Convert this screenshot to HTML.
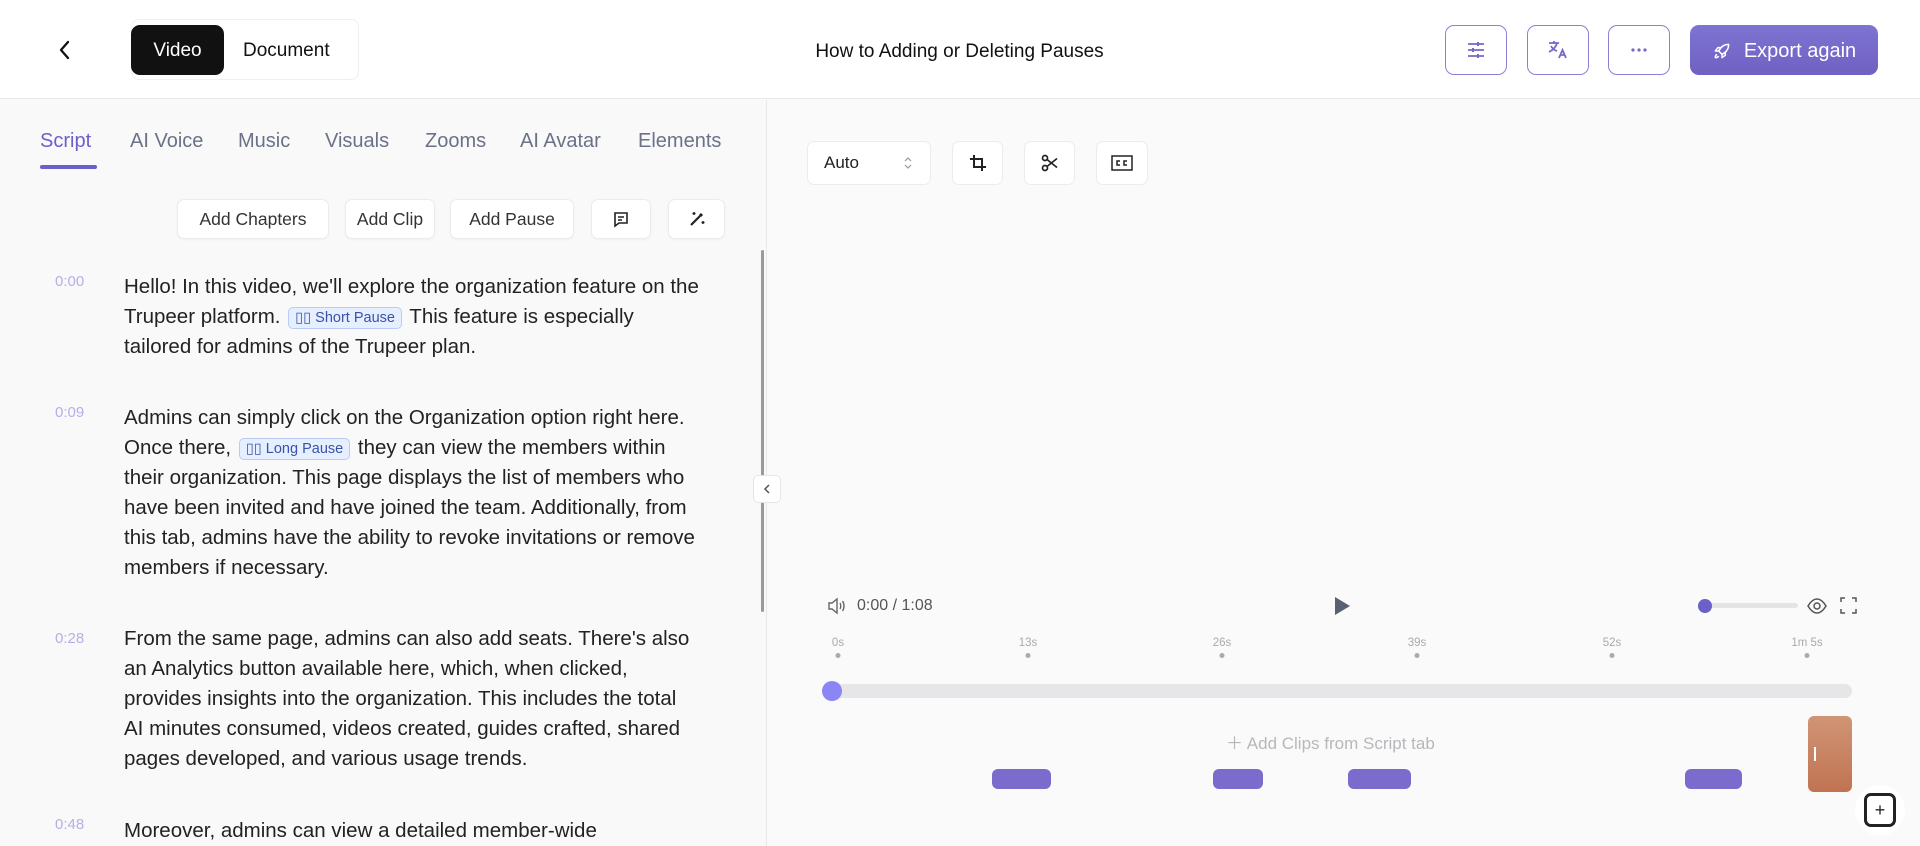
<!DOCTYPE html>
<html><head><meta charset="utf-8"><style>
*{box-sizing:border-box;margin:0;padding:0}
body{width:1920px;height:846px;overflow:hidden;background:#fafafa;font-family:"Liberation Sans",sans-serif;position:relative;color:#1f1f1f}
.a{position:absolute}
.hdr{left:0;top:0;width:1920px;height:99px;background:#fff;border-bottom:1px solid #e8e8ea}
.ib{border:1.5px solid #8a80d8;border-radius:9px;width:62px;height:50px;top:25px;display:flex;align-items:center;justify-content:center;background:#fff}
.tab{top:130px;font-size:20px;color:#6b7287}
.btn{top:199px;height:40px;background:#fff;border:1px solid #ececef;border-radius:7px;font-size:17.5px;color:#333;display:flex;align-items:center;justify-content:center;box-shadow:0 1px 2px rgba(0,0,0,.04)}
.ts{left:55px;font-size:15px;color:#b4b0e6}
.p{left:124px;font-size:20.5px;line-height:30px;color:#222;white-space:nowrap}
.chip{display:inline-block;background:#e6efff;border:1px solid #b8cdf5;color:#3a52a8;font-size:14.5px;line-height:20px;padding:0 6px;border-radius:5px;vertical-align:1px;margin:0 2px}
.tb{top:141px;height:44px;background:#fff;border:1px solid #ececef;border-radius:7px;display:flex;align-items:center;justify-content:center}
.tick{top:637px;font-size:11.5px;color:#aaa;transform:translateX(-50%)}
.dot{top:653px;width:5px;height:5px;border-radius:50%;background:#aaa;transform:translateX(-50%)}
.clip{top:769px;height:20px;border-radius:6px;background:#7a6bcc}
</style></head><body>
<div class="a hdr"></div>
<svg class="a" style="left:56px;top:38px" width="18" height="24" viewBox="0 0 18 24"><path d="M12 4L5 12l7 8" fill="none" stroke="#111" stroke-width="2.3" stroke-linecap="round" stroke-linejoin="round"/></svg>
<div class="a" style="left:131px;top:19px;width:228px;height:61px;border:1px solid #f0f0f2;border-radius:8px;background:#fff"></div>
<div class="a" style="left:131px;top:25px;width:93px;height:50px;background:#111;border-radius:9px;color:#fff;font-size:19px;display:flex;align-items:center;justify-content:center;padding-top:2px">Video</div>
<div class="a" style="left:243px;top:40px;font-size:19px;color:#111">Document</div>
<div class="a" style="left:0;width:1918px;top:41px;text-align:center;font-size:19px;color:#111;padding-left:1px">How to Adding or Deleting Pauses</div>
<div class="a ib" style="left:1445px"><svg width="20" height="20" viewBox="0 0 20 20" fill="none" stroke="#7468c8" stroke-width="1.8"><path d="M2 4h16M2 10h16M2 16h16"/><path d="M12 2v4M7 8v4M12 14v4" stroke-width="2"/></svg></div>
<div class="a ib" style="left:1527px"><svg width="22" height="22" viewBox="0 0 22 22" fill="none" stroke="#7468c8" stroke-width="1.8"><path d="M2 4h10M7 2v2M10 4c-1 4-4 7-8 9M4 7c1 2 3 4 6 5"/><path d="M12 19l3.5-8 3.5 8M13.3 16h4.4"/></svg></div>
<div class="a ib" style="left:1608px"><svg width="20" height="6" viewBox="0 0 20 6" fill="#7468c8"><circle cx="4" cy="3" r="1.6"/><circle cx="10" cy="3" r="1.6"/><circle cx="16" cy="3" r="1.6"/></svg></div>
<div class="a" style="left:1690px;top:25px;width:188px;height:50px;background:linear-gradient(#7f73d2,#6e61c2);border-radius:9px;color:#fff;font-size:20px;display:flex;align-items:center;justify-content:center;gap:12px;padding-top:2px"><svg width="20" height="20" viewBox="0 0 24 24" fill="none" stroke="#fff" stroke-width="1.8" stroke-linejoin="round"><path d="M20 4c-6 0-10 4-12 8l4 4c4-2 8-6 8-12z"/><path d="M8 12l-4 0 3-4h4M12 16v4l4-3v-4"/><path d="M6 16c-2 1-2 3-2 4 1 0 3 0 4-2"/></svg>Export again</div>
<!-- left panel -->
<div class="a" style="left:0;top:100px;width:767px;height:746px;background:#f9f9fa;border-right:1px solid #e8e8ea"></div>
<div class="a tab" style="left:40px;color:#6b5fc9">Script</div>
<div class="a" style="left:40px;top:165px;width:57px;height:4px;border-radius:2px;background:#6b5fc9"></div>
<div class="a tab" style="left:130px">AI Voice</div>
<div class="a tab" style="left:238px">Music</div>
<div class="a tab" style="left:325px">Visuals</div>
<div class="a tab" style="left:425px">Zooms</div>
<div class="a tab" style="left:520px">AI Avatar</div>
<div class="a tab" style="left:638px">Elements</div>
<div class="a btn" style="left:177px;width:152px">Add Chapters</div>
<div class="a btn" style="left:345px;width:90px">Add Clip</div>
<div class="a btn" style="left:450px;width:124px">Add Pause</div>
<div class="a btn" style="left:591px;width:60px"><svg width="18" height="18" viewBox="0 0 18 18" fill="none" stroke="#222" stroke-width="1.6"><path d="M3 3h12v10H7l-4 3z"/><path d="M6 7h6M6 10h4"/></svg></div>
<div class="a btn" style="left:668px;width:57px"><svg width="20" height="20" viewBox="0 0 20 20" fill="none" stroke="#222" stroke-width="2.2"><path d="M4 16l9-9"/><path d="M13 7l2-2" stroke-width="3"/><path d="M7 3v3M5.5 4.5h3M16 12v3M14.5 13.5h3" stroke-width="1.4"/></svg></div>
<div class="a" style="left:761px;top:250px;width:3px;height:362px;background:#9a9a9a;border-radius:2px"></div>
<div class="a" style="left:753px;top:475px;width:28px;height:28px;background:#fff;border:1px solid #e6e6e8;border-radius:5px;display:flex;align-items:center;justify-content:center"><svg width="10" height="12" viewBox="0 0 10 12"><path d="M7 2L3 6l4 4" fill="none" stroke="#555" stroke-width="1.5"/></svg></div>
<div class="a ts" style="top:273px">0:00</div>
<div class="a p" style="top:272px">Hello! In this video, we'll explore the organization feature on the<br>Trupeer platform. <span class="chip">▯▯ Short Pause</span> This feature is especially<br>tailored for admins of the Trupeer plan.</div>
<div class="a ts" style="top:404px">0:09</div>
<div class="a p" style="top:403px">Admins can simply click on the Organization option right here.<br>Once there, <span class="chip">▯▯ Long Pause</span> they can view the members within<br>their organization. This page displays the list of members who<br>have been invited and have joined the team. Additionally, from<br>this tab, admins have the ability to revoke invitations or remove<br>members if necessary.</div>
<div class="a ts" style="top:630px">0:28</div>
<div class="a p" style="top:624px">From the same page, admins can also add seats. There's also<br>an Analytics button available here, which, when clicked,<br>provides insights into the organization. This includes the total<br>AI minutes consumed, videos created, guides crafted, shared<br>pages developed, and various usage trends.</div>
<div class="a ts" style="top:816px">0:48</div>
<div class="a p" style="top:816px">Moreover, admins can view a detailed member-wide</div>
<!-- right -->
<div class="a tb" style="left:807px;width:124px;justify-content:space-between;padding:0 18px 0 16px;font-size:17px;color:#222">Auto<svg width="8" height="14" viewBox="0 0 8 14" fill="none" stroke="#999" stroke-width="1.2"><path d="M1 5l3-3 3 3M1 9l3 3 3-3"/></svg></div>
<div class="a tb" style="left:952px;width:51px"><svg width="18" height="18" viewBox="0 0 18 18" fill="none" stroke="#222" stroke-width="2"><path d="M5 1v12h12M1 5h12v12"/></svg></div>
<div class="a tb" style="left:1024px;width:51px"><svg width="18" height="18" viewBox="0 0 18 18" fill="none" stroke="#222" stroke-width="1.7"><circle cx="4" cy="4" r="2.5"/><circle cx="4" cy="14" r="2.5"/><path d="M6 5.5l10 8M6 12.5l10-8"/></svg></div>
<div class="a tb" style="left:1096px;width:52px"><svg width="22" height="16" viewBox="0 0 22 16" fill="none" stroke="#222" stroke-width="1.5"><rect x="1" y="1" width="20" height="14"/><path d="M9 6H6v4h3M16 6h-3v4h3"/></svg></div>
<svg class="a" style="left:827px;top:597px" width="20" height="18" viewBox="0 0 20 18" fill="none" stroke="#666" stroke-width="1.4"><path d="M2 6h3l5-4v14l-5-4H2z"/><path d="M13 6c1 1.5 1 4.5 0 6M15.5 4c2 3 2 7 0 10"/></svg>
<div class="a" style="left:857px;top:597px;font-size:16px;color:#555">0:00 / 1:08</div>
<svg class="a" style="left:1333px;top:596px" width="18" height="20" viewBox="0 0 18 20"><path d="M2 1l15 9-15 9z" fill="#5a6173"/></svg>
<div class="a" style="left:1702px;top:603px;width:96px;height:5px;border-radius:3px;background:#e4e4e6"></div>
<div class="a" style="left:1698px;top:599px;width:14px;height:14px;border-radius:50%;background:#6b5fc9"></div>
<svg class="a" style="left:1807px;top:597px" width="20" height="18" viewBox="0 0 20 18" fill="none" stroke="#555" stroke-width="1.5"><path d="M1 9c3-5 6-7 9-7s6 2 9 7c-3 5-6 7-9 7s-6-2-9-7z"/><circle cx="10" cy="9" r="3"/></svg>
<svg class="a" style="left:1840px;top:597px" width="17" height="17" viewBox="0 0 17 17" fill="none" stroke="#555" stroke-width="1.5"><path d="M1 5V1h4M12 1h4v4M16 12v4h-4M5 16H1v-4"/></svg>
<div class="a tick" style="left:838px">0s</div><div class="a dot" style="left:838px"></div>
<div class="a tick" style="left:1028px">13s</div><div class="a dot" style="left:1028px"></div>
<div class="a tick" style="left:1222px">26s</div><div class="a dot" style="left:1222px"></div>
<div class="a tick" style="left:1417px">39s</div><div class="a dot" style="left:1417px"></div>
<div class="a tick" style="left:1612px">52s</div><div class="a dot" style="left:1612px"></div>
<div class="a tick" style="left:1807px">1m 5s</div><div class="a dot" style="left:1807px"></div>
<div class="a" style="left:824px;top:684px;width:1028px;height:14px;border-radius:7px;background:#e6e6e8"></div>
<div class="a" style="left:822px;top:681px;width:20px;height:20px;border-radius:50%;background:#8b86f5"></div>
<div class="a" style="left:1226px;top:729px;font-size:17px;color:#b8b8bc">＋ Add Clips from Script tab</div>
<div class="a clip" style="left:992px;width:59px"></div>
<div class="a clip" style="left:1213px;width:50px"></div>
<div class="a clip" style="left:1348px;width:63px"></div>
<div class="a clip" style="left:1685px;width:57px"></div>
<div class="a" style="left:1808px;top:716px;width:44px;height:76px;border-radius:6px;background:linear-gradient(#d09575,#c07352)"></div>
<div class="a" style="left:1814px;top:747px;width:2px;height:14px;border-left:1px solid #fff;border-right:1px solid #fff"></div>
<div class="a" style="left:1855px;top:785px;width:50px;height:50px;border-radius:50%;background:#fff"></div>
<div class="a" style="left:1864px;top:793px;width:32px;height:34px;border:3px solid #222;border-radius:7px;font-size:18px;line-height:28px;text-align:center;color:#222">+</div>
</body></html>
